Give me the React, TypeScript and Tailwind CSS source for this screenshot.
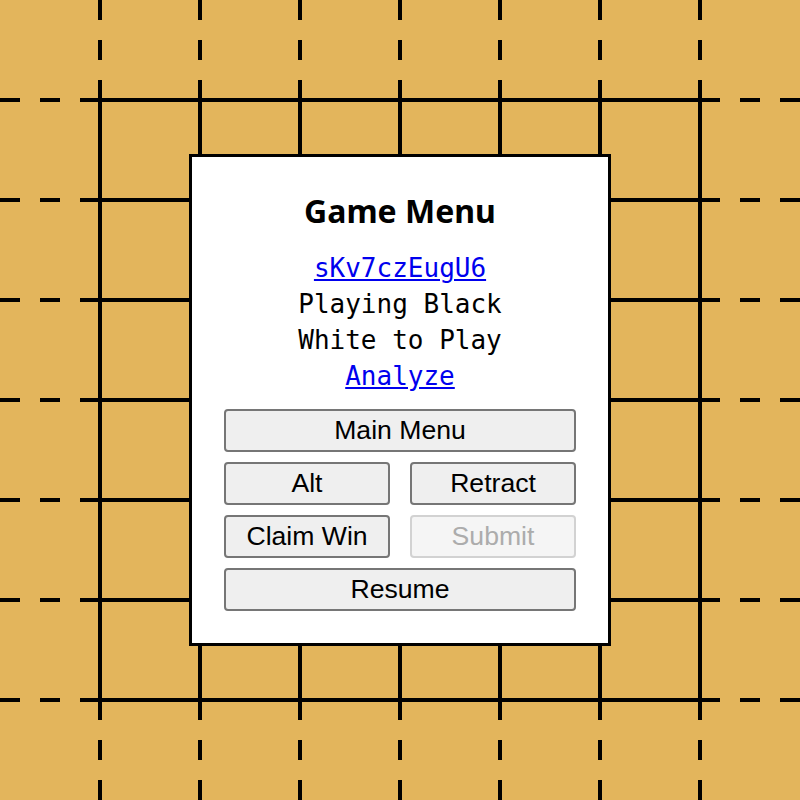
import type { ReactNode } from "react";

const positions = [100, 200, 300, 400, 500, 600, 700];
// dash 0-80 in two pieces, solid 80-720, dashes again to the edge
const dashes = "20 20 20 20 640 20 20 20 20 20";

function Board() {
  return (
    <svg className="absolute inset-0" width={800} height={800} viewBox="0 0 800 800">
      <rect width={800} height={800} fill="#e3b55c" />
      {positions.map((p) => (
        <g key={p} stroke="#000" strokeWidth={4} strokeDasharray={dashes}>
          <line x1={p} y1={0} x2={p} y2={800} />
          <line x1={0} y1={p} x2={800} y2={p} />
        </g>
      ))}
    </svg>
  );
}

function MenuButton({ children, disabled, wide }: { children: ReactNode; disabled?: boolean; wide?: boolean }) {
  return (
    <button
      disabled={disabled}
      className={
        "h-[43px] rounded-[4px] border-2 text-[26.6px] leading-none font-['Liberation_Sans',Arial,sans-serif] " +
        (wide ? "col-span-2 " : "") +
        (disabled
          ? "border-[#d2d2d2] bg-[#f5f5f5] text-[#acacac]"
          : "border-[#767676] bg-[#efefef] text-black")
      }
    >
      {children}
    </button>
  );
}

export default function App() {
  return (
    <div className="relative h-[800px] w-[800px] overflow-hidden">
      <Board />
      <div className="relative flex h-full items-center justify-center">
        <div className="w-[422px] border-[3px] border-black bg-white px-8 pt-[32px] pb-[32px] text-center">
          <h2 className="text-[32px] leading-[43px] font-bold text-black font-['Noto_Sans',sans-serif]">
            Game Menu
          </h2>
          <div className="mt-[18px] text-[26px] leading-[36px] text-black font-['DejaVu_Sans_Mono',monospace]">
            <a href="#" className="text-[#0000ee] underline">
              sKv7czEugU6
            </a>
            <div>Playing Black</div>
            <div>White to Play</div>
            <a href="#" className="text-[#0000ee] underline">
              Analyze
            </a>
          </div>
          <div className="mt-[15px] grid grid-cols-2 gap-x-5 gap-y-[10px]">
            <MenuButton wide>Main Menu</MenuButton>
            <MenuButton>Alt</MenuButton>
            <MenuButton>Retract</MenuButton>
            <MenuButton>Claim Win</MenuButton>
            <MenuButton disabled>Submit</MenuButton>
            <MenuButton wide>Resume</MenuButton>
          </div>
        </div>
      </div>
    </div>
  );
}
